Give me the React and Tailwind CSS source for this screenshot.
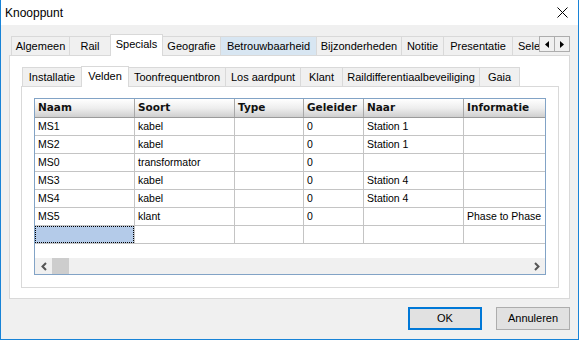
const TOP_TABS = [
  { label: 'Algemeen', w: 'w-[59px]' },
  { label: 'Rail', w: 'w-[42px]' },
  { label: 'Specials', w: 'w-[53px]', active: true },
  { label: 'Geografie', w: 'w-[59px]' },
  { label: 'Betrouwbaarheid', w: 'w-[97px]', hover: true },
  { label: 'Bijzonderheden', w: 'w-[86px]' },
  { label: 'Notitie', w: 'w-[43px]' },
  { label: 'Presentatie', w: 'w-[70px]' },
  { label: 'Selectie', w: 'w-[80px]', left: true },
]

const SUB_TABS = [
  { label: 'Installatie', w: 'w-[60px]' },
  { label: 'Velden', w: 'w-[48px]', active: true },
  { label: 'Toonfrequentbron', w: 'w-[98px]' },
  { label: 'Los aardpunt', w: 'w-[76px]' },
  { label: 'Klant', w: 'w-[43px]' },
  { label: 'Raildifferentiaalbeveiliging', w: 'w-[138px]' },
  { label: 'Gaia', w: 'w-[41px]' },
]

const COLUMNS = [
  { label: 'Naam', w: 'w-[100px]' },
  { label: 'Soort', w: 'w-[100px]' },
  { label: 'Type', w: 'w-[69px]' },
  { label: 'Geleider', w: 'w-[60px]' },
  { label: 'Naar', w: 'w-[100px]' },
  { label: 'Informatie', w: 'w-[120px]' },
]

const ROWS = [
  ['MS1', 'kabel', '', '0', 'Station 1', ''],
  ['MS2', 'kabel', '', '0', 'Station 1', ''],
  ['MS0', 'transformator', '', '0', '', ''],
  ['MS3', 'kabel', '', '0', 'Station 4', ''],
  ['MS4', 'kabel', '', '0', 'Station 4', ''],
  ['MS5', 'klant', '', '0', '', 'Phase to Phase'],
]

function Tab({ tab, first, tall }) {
  if (tab.active) {
    return (
      <div
        className={`${tab.w} ${first ? '' : '-ml-px'} ${tall ? 'h-[22px]' : 'h-[21px]'} shrink-0 relative z-10 bg-white border-t border-x border-[#d9d9d9] flex items-center justify-center pb-[2px] whitespace-nowrap`}
      >
        {tab.label}
      </div>
    )
  }
  return (
    <div
      className={`${tab.w} ${first ? '' : '-ml-px'} h-[19px] mb-px shrink-0 border-t border-x border-[#d9d9d9] ${tab.hover ? 'bg-[#d8e6f2]' : 'bg-[#f0f0f0]'} flex items-center ${tab.left ? 'justify-start pl-[5px]' : 'justify-center'} whitespace-nowrap`}
    >
      {tab.label}
    </div>
  )
}

function ScrollArrow({ dir }) {
  return (
    <div className={`w-[16px] h-[16px] ${dir === 'right' ? '-ml-px' : ''} border border-[#adadad] bg-[#f0f0f0] flex items-center justify-center`}>
      <svg width="4" height="7" viewBox="0 0 4 7">
        {dir === 'left' ? <path d="M4 0v7L0 3.5z" fill="#000" /> : <path d="M0 0v7l4-3.5z" fill="#000" />}
      </svg>
    </div>
  )
}

function Grid() {
  return (
    <div className="w-[512px] h-[177px] border border-[#82a3c6] bg-white flex flex-col overflow-hidden font-['Liberation_Sans',Arial,sans-serif] text-[10.5px] text-black">
      <div className="flex h-[19px] shrink-0 bg-gradient-to-b from-[#ffffff] via-[#eeeeee] to-[#cfcfcf] border-b border-[#9a9a9a]">
        {COLUMNS.map((c) => (
          <div
            key={c.label}
            className={`${c.w} shrink-0 border-r border-[#a8a8a8] px-[3px] flex items-center font-['DejaVu_Sans',sans-serif] font-bold text-[10.5px] text-[#111]`}
          >
            {c.label}
          </div>
        ))}
      </div>
      {ROWS.map((r, i) => (
        <div key={i} className="flex h-[18px] shrink-0 border-b border-[#c4c4c4]">
          {r.map((v, j) => (
            <div key={j} className={`${COLUMNS[j].w} shrink-0 border-r border-[#c4c4c4] px-[3px] flex items-center whitespace-nowrap overflow-hidden`}>
              {v}
            </div>
          ))}
        </div>
      ))}
      <div className="flex h-[18px] shrink-0 border-b border-[#c4c4c4]">
        {COLUMNS.map((c, j) => (
          <div key={j} className={`${c.w} shrink-0 border-r border-[#c4c4c4]`}>
            {j === 0 && <div className="h-full w-full bg-[#b4cbe9] border border-dotted border-black" />}
          </div>
        ))}
      </div>
      <div className="flex-1" />
      <div className="h-[16px] shrink-0 bg-[#f0f0f0] flex items-center">
        <div className="w-[17px] flex items-center justify-center">
          <svg width="6" height="9" viewBox="0 0 6 9">
            <path d="M5 1L1.5 4.5 5 8" stroke="#555" strokeWidth="2" fill="none" />
          </svg>
        </div>
        <div className="w-[17px] h-full bg-[#cdcdcd]" />
        <div className="flex-1" />
        <div className="w-[17px] flex items-center justify-center">
          <svg width="6" height="9" viewBox="0 0 6 9">
            <path d="M1 1l3.5 3.5L1 8" stroke="#555" strokeWidth="2" fill="none" />
          </svg>
        </div>
      </div>
    </div>
  )
}

export default function App() {
  return (
    <div className="w-[579px] h-[340px] bg-[#f0f0f0] border-x border-b border-[#1883d7] flex flex-col font-['Liberation_Sans',Arial,sans-serif] text-[11px] text-black overflow-hidden">
      <div className="h-[25px] shrink-0 bg-white flex items-center justify-between pl-[4px] pr-[10px]">
        <span className="text-[12px]">Knooppunt</span>
        <svg width="11" height="11" viewBox="0 0 11 11">
          <path d="M0.5 0.5l10 10M10.5 0.5l-10 10" stroke="#000" strokeWidth="1" />
        </svg>
      </div>

      <div className="px-[8px] mt-[9px] flex flex-col">
        <div className="flex h-[22px] -mb-px relative z-10">
          <div className="flex-1 min-w-0 flex items-end pl-[2px] overflow-hidden">
            {TOP_TABS.map((t, i) => (
              <Tab key={t.label} tab={t} first={i === 0} tall />
            ))}
          </div>
          <div className="flex mt-[2px] self-start">
            <ScrollArrow dir="left" />
            <ScrollArrow dir="right" />
          </div>
        </div>

        <div className="h-[244px] bg-white border border-[#d9d9d9] pl-[11px] pr-[10px] pt-[10px] pb-[10px] flex flex-col">
          <div className="flex items-end h-[21px] -mb-px pl-[1px] relative z-10">
            {SUB_TABS.map((t, i) => (
              <Tab key={t.label} tab={t} first={i === 0} />
            ))}
          </div>
          <div className="flex-1 bg-white border border-[#d9d9d9] pl-[12px] pt-[11px]">
            <Grid />
          </div>
        </div>

        <div className="flex justify-end gap-[14px] mt-[8px] text-[11px]">
          <button className="w-[74px] h-[23px] border-2 border-[#0078d7] bg-[#e1e1e1] flex items-center justify-center">
            OK
          </button>
          <button className="w-[74px] h-[23px] border border-[#adadad] bg-[#e1e1e1] flex items-center justify-center">
            Annuleren
          </button>
        </div>
      </div>
    </div>
  )
}
